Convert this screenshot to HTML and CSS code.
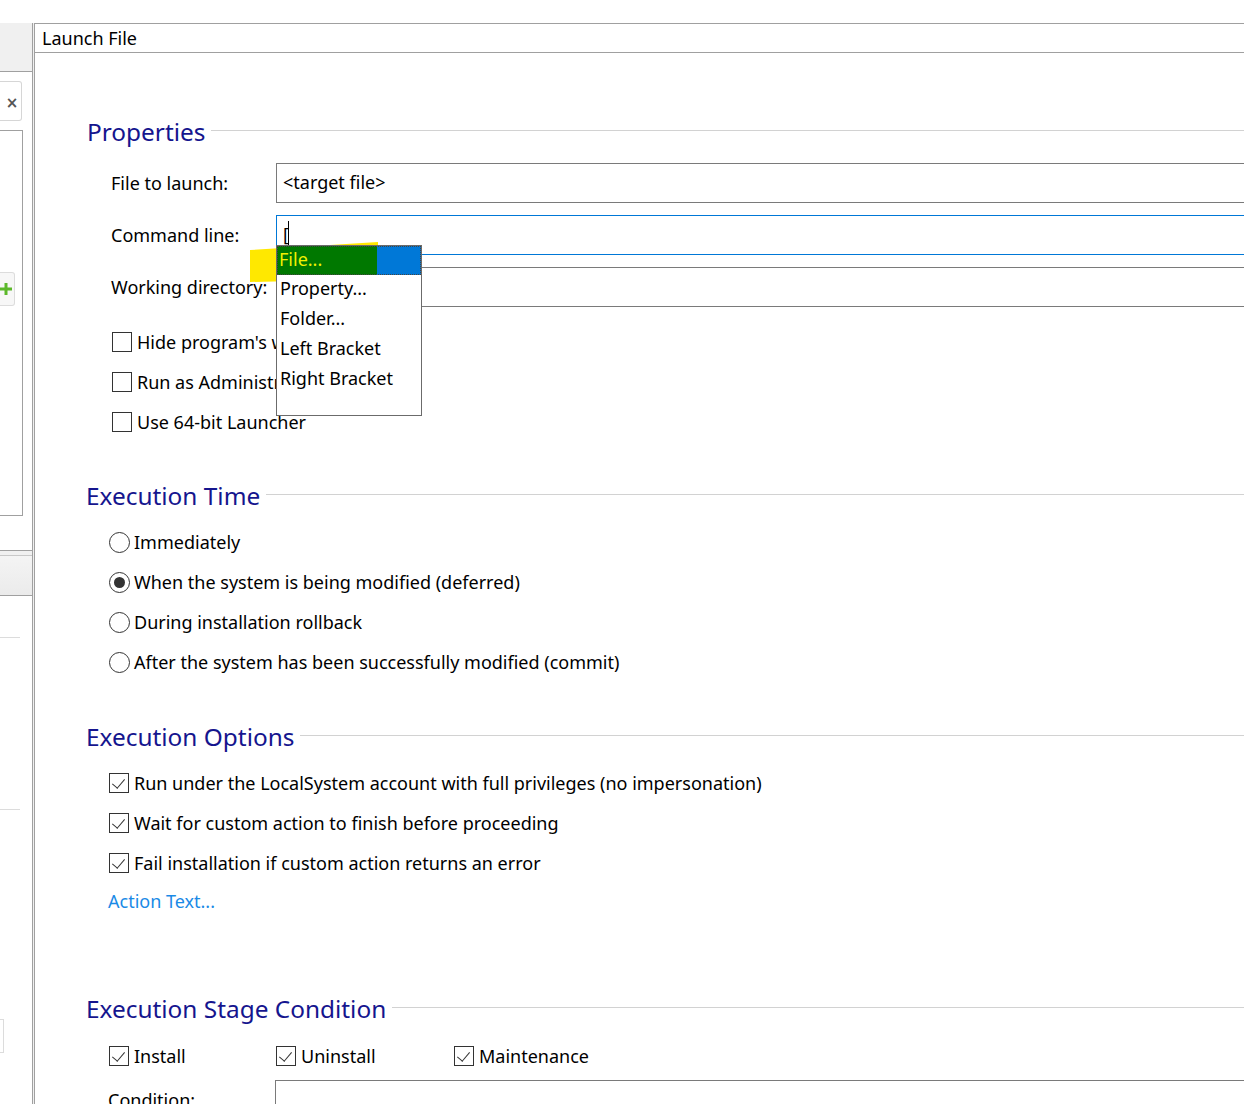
FILE: index.html
```html
<!DOCTYPE html>
<html>
<head>
<meta charset="utf-8">
<link rel="stylesheet" href="styles.css">
</head>
<body>
<div class="topband"></div>
<div class="app">
  <aside class="side">
    <div class="side-gray"></div>
    <div class="side-box">
      <div class="close-box"><span class="close-x">×</span></div>
      <div class="list-box">
        <div class="add-btn"><svg width="14" height="14" viewBox="0 0 14 14"><path d="M0 7h12M6 1v12" stroke="#5cb82a" stroke-width="3"/></svg></div>
      </div>
    </div>
    <div class="side-head"></div>
    <div class="side-body">
      <div class="side-line l1"></div>
      <div class="side-line l2"></div>
      <div class="side-small"></div>
    </div>
  </aside>
  <div class="strip"></div>
  <main class="panel">
    <div class="titlebar">Launch File</div>
    <div class="content">
      <section class="sec sec-props">
        <div class="heading"><span>Properties</span><i></i></div>
        <div class="field first"><label>File to launch:</label><div class="input">&lt;target file&gt;</div></div>
        <div class="field"><label>Command line:</label><div class="input focus"><span class="typed">[</span><span class="caret"></span></div></div>
        <div class="field"><label>Working directory:</label><div class="input"></div></div>
        <div class="checks props-checks">
          <div class="opt"><span class="cb"></span>Hide program's window</div>
          <div class="opt"><span class="cb"></span>Run as Administrator</div>
          <div class="opt"><span class="cb"></span>Use 64-bit Launcher</div>
        </div>
        <svg class="hilite" width="140" height="50" viewBox="0 0 140 50"><polygon points="2,11 130,3 130,40 2,43" fill="#ffe800"/></svg>
        <div class="menu">
          <div class="mi sel"><span class="sel-green">File...</span><span class="sel-blue"></span></div>
          <div class="mi">Property...</div>
          <div class="mi">Folder...</div>
          <div class="mi">Left Bracket</div>
          <div class="mi">Right Bracket</div>
        </div>
      </section>

      <section class="sec sec-time">
        <div class="heading"><span>Execution Time</span><i></i></div>
        <div class="checks">
          <div class="opt"><span class="rb"></span>Immediately</div>
          <div class="opt"><span class="rb on"></span>When the system is being modified (deferred)</div>
          <div class="opt"><span class="rb"></span>During installation rollback</div>
          <div class="opt"><span class="rb"></span>After the system has been successfully modified (commit)</div>
        </div>
      </section>

      <section class="sec sec-opts">
        <div class="heading"><span>Execution Options</span><i></i></div>
        <div class="checks">
          <div class="opt"><span class="cb on"></span>Run under the LocalSystem account with full privileges (no impersonation)</div>
          <div class="opt"><span class="cb on"></span>Wait for custom action to finish before proceeding</div>
          <div class="opt"><span class="cb on"></span>Fail installation if custom action returns an error</div>
        </div>
        <a class="link">Action Text...</a>
      </section>

      <section class="sec sec-stage">
        <div class="heading"><span>Execution Stage Condition</span><i></i></div>
        <div class="stage-row">
          <div class="opt w1"><span class="cb on"></span>Install</div>
          <div class="opt w2"><span class="cb on"></span>Uninstall</div>
          <div class="opt"><span class="cb on"></span>Maintenance</div>
        </div>
        <div class="field cond"><label>Condition:</label><div class="input"></div></div>
      </section>
    </div>
  </main>
</div>
</body>
</html>
```

FILE: styles.css
```css
* { box-sizing: border-box; }
html, body { margin: 0; padding: 0; background: #fff; overflow: hidden; }
body {
  font-family: "Noto Sans", "Open Sans", sans-serif;
  font-size: 18px;
  color: #000;
  width: 1244px;
  height: 1104px;
}
.topband { height: 23px; background: #fff; }
.app { display: flex; height: 1081px; }

/* left side panel */
.side { width: 33px; background: #f0f0f0; border-right: 1px solid #a0a0a0; display: flex; flex-direction: column; }
.side-gray { height: 48px; }
.side-box { height: 480px; background: #fff; border-top: 1px solid #a0a0a0; border-bottom: 1px solid #a0a0a0; padding-top: 9px; }
.close-box { width: 22px; height: 40px; border: 1px solid #d6d6d6; border-left: none; border-radius: 0 3px 3px 0; display: flex; align-items: center; justify-content: center; padding-top: 4px; }
.close-x { font-family: "DejaVu Sans", sans-serif; font-weight: bold; font-size: 15px; color: #555; margin-left: 3px; }
.list-box { margin-top: 9px; width: 23px; height: 386px; border: 1px solid #a0a0a0; border-left: none; padding-top: 141px; }
.add-btn { width: 15px; height: 34px; border: 1px solid #dcdcdc; border-left: none; border-radius: 0 3px 3px 0; background: #f7f7f7; display: flex; align-items: center; }
.side-head { margin-top: 4px; height: 41px; background: linear-gradient(#f4f4f4, #ebebeb); border-top: 1px solid #c8c8c8; border-bottom: 1px solid #a0a0a0; }
.side-body { flex: 1; background: #fff; padding-top: 41px; }
.side-line { width: 20px; height: 1px; background: #dcdcdc; }
.l2 { margin-top: 171px; }
.side-small { margin-top: 209px; width: 4px; height: 34px; border: 1px solid #dcdcdc; border-left: none; }

.strip { width: 2px; background: #f0f0f0; border-right: 1px solid #a0a0a0; }

/* main panel */
.panel { flex: 1; display: flex; flex-direction: column; min-width: 0; }
.titlebar { height: 30px; border-top: 1px solid #a0a0a0; border-bottom: 1px solid #a0a0a0; padding-left: 7px; line-height: 29px; font-size: 18px; }
.content { flex: 1; padding-left: 51px; overflow: hidden; }

.sec { position: relative; }
.heading { display: flex; align-items: center; height: 32px; color: #15158e; font-size: 24.4px; }
.heading span { padding-right: 6px; white-space: nowrap; }
.heading i { flex: 1; height: 1px; background: #d2d2d2; margin-top: -2px; }

.sec-props { margin-top: 62px; }
.sec-props .heading { margin-left: 1px; }
.field { display: flex; align-items: center; height: 40px; margin-top: 12px; }
.field.first { margin-top: 16px; }
.field label { width: 190px; padding-left: 25px; flex: none; white-space: nowrap; }
.input { flex: 1; height: 40px; border: 1px solid #7a7a7a; border-right: none; padding: 5px 0 0 6px; line-height: 26px; white-space: nowrap; }
.input.focus { border-color: #0078d7; position: relative; }
.typed { display: inline-block; width: 6px; position: relative; }
.typed::after { content: ""; position: absolute; left: 0; bottom: 1px; width: 7px; height: 2px; border-bottom: 1px dotted #e02020; }
.caret { display: inline-block; width: 1px; height: 26px; background: #000; vertical-align: top; margin-left: -1px; }

.checks { display: flex; flex-direction: column; }
.opt { display: flex; align-items: center; height: 40px; white-space: nowrap; }
.props-checks { margin-top: 15px; padding-left: 26px; }

.cb { width: 20px; height: 20px; border: 1px solid #333; margin-right: 5px; flex: none; position: relative; background: #fff; }
.cb.on::after { content: ""; position: absolute; left: 5px; top: 2px; width: 6px; height: 11px; border-right: 1.4px solid #333; border-bottom: 1.4px solid #333; transform: rotate(40deg); }
.rb { width: 21px; height: 21px; border: 1px solid #333; border-radius: 50%; margin-right: 4px; flex: none; position: relative; }
.rb.on::after { content: ""; position: absolute; left: 4px; top: 4px; width: 11px; height: 11px; border-radius: 50%; background: #333; }

.hilite { position: absolute; left: 162px; top: 124px; }
.menu { position: absolute; left: 190px; top: 130px; width: 146px; height: 171px; background: #fff; border: 1px solid #6b6b6b; }
.mi { height: 30px; line-height: 26px; padding-left: 3px; white-space: nowrap; }
.mi.sel { display: flex; padding: 0; outline: 1px dotted #444; outline-offset: -1px; height: 29px; line-height: 26px; }
.sel-green { width: 100px; background: #007800; color: #f2f000; padding-left: 2px; }
.sel-blue { flex: 1; background: #0078d7; }

.sec-time { margin-top: 37px; }
.sec-time .checks, .sec-opts .checks { margin-top: 11px; padding-left: 23px; }
.sec-opts { margin-top: 38px; }
.link { display: block; margin-left: 22px; color: #1a8ae6; height: 36px; line-height: 36px; margin-top: 0; }
.sec-stage { margin-top: 73px; }
.stage-row { display: flex; margin-top: 12px; padding-left: 23px; }
.w1 { width: 167px; }
.w2 { width: 178px; }
.field.cond { margin-top: 4px; }
.field.cond label { padding-left: 22px; width: 189px; }
```
